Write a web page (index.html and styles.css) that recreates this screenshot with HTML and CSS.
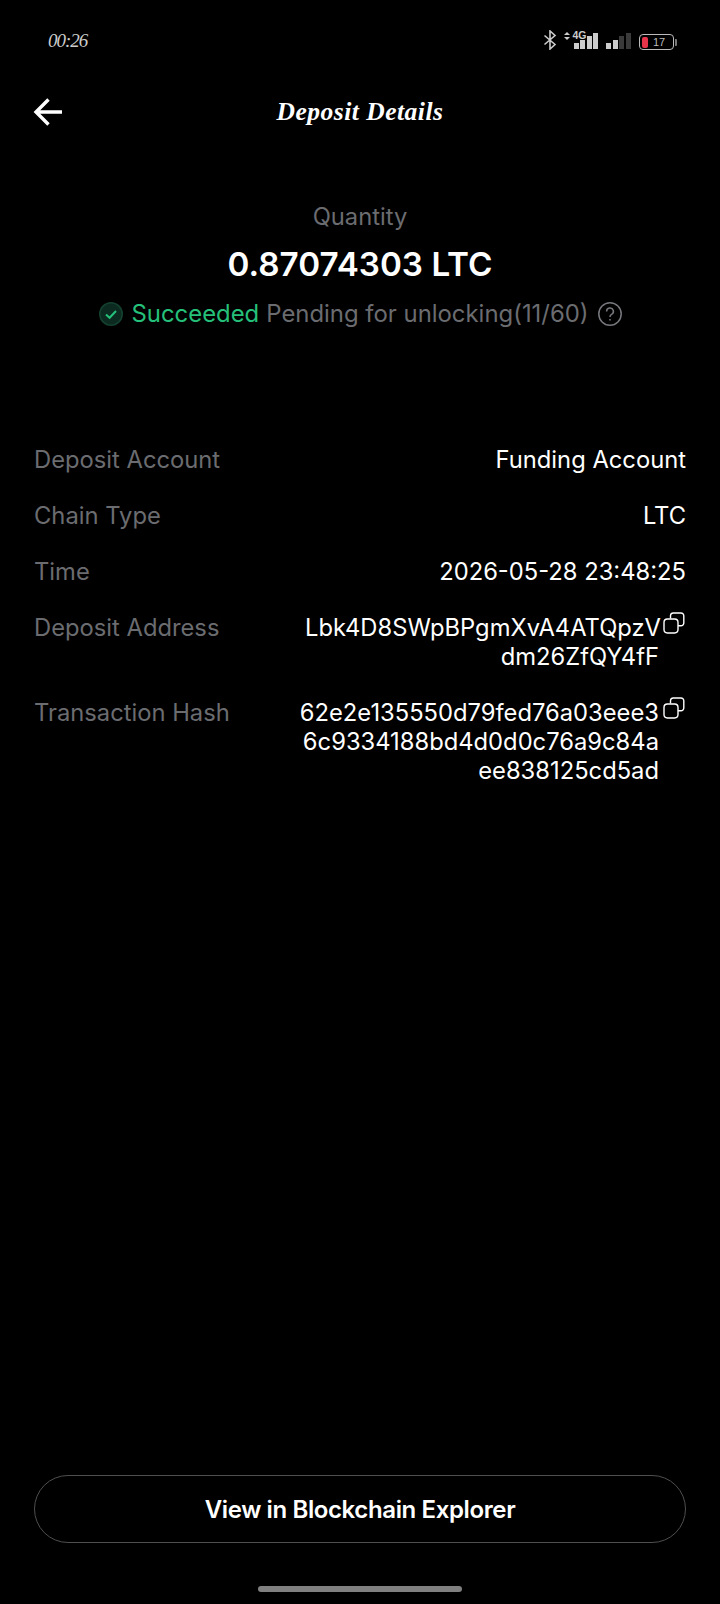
FILE: index.html
```html
<!DOCTYPE html>
<html lang="en">
<head>
<meta charset="utf-8">
<title>Deposit Details</title>
<link rel="stylesheet" href="styles.css">
</head>
<body>
<div class="screen">
  <div class="status">
    <span class="time">00:26</span>
    <div class="status-icons">
      <svg class="bt" width="14" height="20" viewBox="0 0 14 20" fill="none" stroke="#ccc" stroke-width="1.6"><path d="M1.5 5.5 L12 14.5 L7 19 V1 L12 5.5 L1.5 14.5"/></svg>
      <div class="net">
        <span class="arrows"><i class="up"></i><i class="down"></i></span>
        <span class="fourg">4G</span>
      </div>
      <div class="bars bars-a"><i class="b1"></i><i class="b2"></i><i class="b3"></i><i class="b4"></i></div>
      <div class="bars bars-b"><i class="b1"></i><i class="b2"></i><i class="b3 dim"></i><i class="b4 dim"></i></div>
      <div class="battery"><div class="cell"><i class="level"></i><span class="pct">17</span></div><i class="cap"></i></div>
    </div>
  </div>
  <header class="nav">
    <svg class="back" width="30" height="30" viewBox="0 0 30 30" fill="none" stroke="#fff" stroke-width="3.4"><path d="M29 15 H3 M15.5 2.5 L3 15 L15.5 27.5"/></svg>
    <h1 class="title">Deposit Details</h1>
  </header>
  <section class="summary">
    <div class="qty-label">Quantity</div>
    <div class="qty">0.87074303 LTC</div>
    <div class="state">
      <svg class="ok" width="24" height="24" viewBox="0 0 24 24" fill="none"><circle cx="12" cy="12" r="11.2" fill="#0c2a20" stroke="#14402f" stroke-width="1.6"/><path d="M7 12.4 L10.6 15.8 L17 9" stroke="#25c07a" stroke-width="2"/></svg>
      <span class="ok-text">Succeeded</span>
      <span class="pending">Pending for unlocking(11/60)</span>
      <svg class="help" width="24" height="24" viewBox="0 0 24 24" fill="none" stroke="#77787d" stroke-width="1.5"><circle cx="12" cy="12" r="11.2"/><path d="M8.6 9.4 A3.4 3.4 0 1 1 13.6 12.4 C12.4 13 12 13.6 12 15"/><path d="M12 17 V18.6"/></svg>
    </div>
  </section>
  <section class="rows">
    <div class="row"><span class="key">Deposit Account</span><span class="val">Funding Account</span></div>
    <div class="row"><span class="key">Chain Type</span><span class="val">LTC</span></div>
    <div class="row"><span class="key">Time</span><span class="val">2026-05-28 23:48:25</span></div>
    <div class="row row-copy">
      <span class="key">Deposit Address</span>
      <div class="val-wrap"><span class="val"><span class="overhang">Lbk4D8SWpBPgmXvA4ATQpzV</span><br>dm26ZfQY4fF</span>
      <svg class="copy" width="22" height="22" viewBox="0 0 22 22" fill="none" stroke="#fff" stroke-width="1.4"><path d="M7.5 6.5 V3.5 A2.8 2.8 0 0 1 10.3 1 H18 A2.8 2.8 0 0 1 20.8 3.8 V11 A2.8 2.8 0 0 1 18 13.8 H15"/><rect x="1" y="7" width="14" height="14" rx="3.4"/></svg></div>
    </div>
    <div class="row row-copy">
      <span class="key">Transaction Hash</span>
      <div class="val-wrap"><span class="val">62e2e135550d79fed76a03eee3<br>6c9334188bd4d0d0c76a9c84a<br>ee838125cd5ad</span>
      <svg class="copy" width="22" height="22" viewBox="0 0 22 22" fill="none" stroke="#fff" stroke-width="1.4"><path d="M7.5 6.5 V3.5 A2.8 2.8 0 0 1 10.3 1 H18 A2.8 2.8 0 0 1 20.8 3.8 V11 A2.8 2.8 0 0 1 18 13.8 H15"/><rect x="1" y="7" width="14" height="14" rx="3.4"/></svg></div>
    </div>
  </section>
  <div class="spacer"></div>
  <button class="explorer">View in Blockchain Explorer</button>
  <div class="home"></div>
</div>
</body>
</html>
```
FILE: styles.css
```css
* { box-sizing: border-box; }
html, body { margin: 0; padding: 0; background: #000; }
.screen { width: 720px; height: 1604px; display: flex; flex-direction: column; background: #000; color: #fff; font-family: Inter, "Liberation Sans", sans-serif; font-size: 23.75px; overflow: hidden; }

.status { height: 80px; padding: 29px 43px 0 48px; display: flex; justify-content: space-between; align-items: flex-start; flex: none; }
.time { font-family: "Liberation Serif", serif; font-style: italic; font-size: 19px; line-height: 24px; color: #ccc; letter-spacing: -1px; }
.status-icons { display: flex; align-items: center; height: 22px; }
.bt { margin-right: 7px; }
.net { position: relative; width: 10px; height: 20px; align-self: flex-start; }
.arrows { position: absolute; left: 0; top: 3px; display: flex; flex-direction: column; gap: 2px; }
.arrows i { display: block; width: 0; height: 0; border-left: 3px solid transparent; border-right: 3px solid transparent; }
.up { border-bottom: 3px solid #ccc; }
.down { border-top: 3px solid #ccc; }
.fourg { position: absolute; left: 9px; top: 1px; font-size: 10.5px; line-height: 11px; font-weight: 700; color: #ccc; font-family: "Liberation Sans", sans-serif; letter-spacing: -.2px; }
.bars { display: flex; align-items: flex-end; gap: 1.5px; height: 18px; }
.bars i { display: block; width: 5px; background: #ccc; }
.bars-a { margin-right: 8px; }
.bars-b { margin-right: 8.5px; }
.b1 { height: 6px; }
.b2 { height: 9px; }
.b3 { height: 13px; }
.b4 { height: 16px; }
.bars .dim { background: #3a3a3a; }
.battery { display: flex; align-items: center; margin-top: 4px; }
.cell { width: 35px; height: 16px; border: 1.3px solid #bbb; border-radius: 4px; display: flex; align-items: center; padding-left: 2px; }
.level { display: block; width: 6px; height: 11px; background: #e8344a; border-radius: 2px; }
.pct { margin-left: 5px; font-family: "Liberation Sans", sans-serif; font-size: 11px; line-height: 12px; color: #bbb; }
.cap { display: block; width: 2px; height: 7px; background: #777; margin-left: 1px; border-radius: 0 1px 1px 0; }

.nav { position: relative; height: 62px; flex: none; display: flex; align-items: center; justify-content: center; padding-top: 2px; }
.back { position: absolute; left: 33px; top: 17px; }
.title { margin: 0; font-family: "Liberation Serif", serif; font-style: italic; font-weight: 700; font-size: 25.5px; line-height: 60px; color: #fff; letter-spacing: .5px; }

.summary { display: flex; flex-direction: column; align-items: center; flex: none; margin-top: 60px; }
.qty-label { line-height: 30px; color: #6b6c70; }
.qty { font-size: 33.25px; line-height: 40px; font-weight: 600; margin-top: 12px; }
.state { display: flex; align-items: center; margin-top: 15px; padding-left: 1px; height: 30px; line-height: 30px; font-size: 23.9px; }
.ok { margin-right: 8px; }
.ok-text { color: #25c07a; }
.pending { color: #6b6c70; margin-left: 7px; }
.help { margin-left: 9px; }

.rows { margin-top: 116px; padding: 0 34px; display: flex; flex-direction: column; gap: 27px; flex: none; }
.row { display: flex; justify-content: space-between; align-items: flex-start; line-height: 29px; }
.key { color: #6b6c70; }
.val { color: #fff; text-align: right; }
.overhang { display: inline-block; margin-right: -2px; }
.val-wrap { display: flex; align-items: flex-start; }
.copy { margin: -1px 1px 0 4px; flex: none; }
.spacer { flex: 1; }
.explorer { flex: none; margin: 0 34px; height: 68px; padding-top: 2px; border-radius: 34px; border: 1px solid #4f4f4f; background: #000; color: #fff; font-family: Inter, "Liberation Sans", sans-serif; font-size: 24px; font-weight: 600; letter-spacing: -.38px; }
.home { flex: none; align-self: center; width: 204px; height: 6px; margin: 43px 0 12px; border-radius: 3px; background: #808080; }
```
